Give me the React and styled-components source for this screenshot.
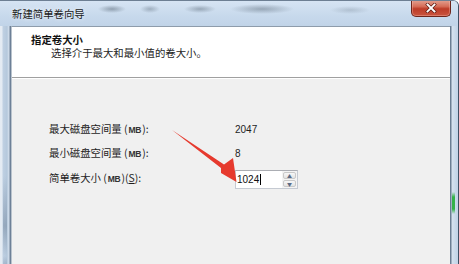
import styled, { createGlobalStyle } from 'styled-components';

const GlobalStyle = createGlobalStyle`
  html, body {
    margin: 0;
    padding: 0;
  }
  body {
    width: 459px;
    height: 264px;
    overflow: hidden;
    background: #fff;
  }
`;

const cjk = `"Noto Sans CJK SC", "Noto Sans", sans-serif`;

const Window = styled.div`
  position: relative;
  width: 459px;
  height: 264px;
  box-sizing: border-box;
  display: flex;
  flex-direction: column;
  overflow: hidden;
  border-top: 1px solid #6d7f93;
  border-right: 1px solid #3f5064;
  border-radius: 0 6px 0 0;
  background: #c9dbee;
  font-family: ${cjk};
`;

const TitleBar = styled.div`
  height: 25px;
  display: flex;
  align-items: flex-start;
  justify-content: space-between;
  padding-left: 12px;
  background:
    radial-gradient(ellipse 14px 4px at 112px 8px, rgba(70, 85, 100, 0.45), transparent),
    radial-gradient(ellipse 10px 4px at 150px 8px, rgba(70, 85, 100, 0.35), transparent),
    radial-gradient(ellipse 16px 4px at 200px 8px, rgba(70, 85, 100, 0.4), transparent),
    radial-gradient(ellipse 32px 5px at 262px 8px, rgba(70, 85, 100, 0.4), transparent),
    radial-gradient(ellipse 20px 4px at 350px 9px, rgba(90, 105, 120, 0.25), transparent),
    linear-gradient(to bottom, #d6e4f3 0%, #c7d9ec 60%, #c1d4e8 100%);
`;

const Title = styled.span`
  margin-top: 6px;
  font-size: 10.4px;
  line-height: 13px;
  color: #1b1b1b;
  text-shadow: 0 0 4px rgba(255, 255, 255, 0.9);
`;

const CloseButton = styled.div`
  width: 40px;
  height: 17px;
  margin-right: 7px;
  margin-top: -1px;
  box-sizing: border-box;
  display: flex;
  align-items: center;
  justify-content: center;
  border: 1px solid #6e251b;
  border-top: none;
  border-radius: 0 0 5px 5px;
  background: linear-gradient(to bottom, #e3a393 0%, #d66d58 40%, #bd3c28 55%, #c9553f 100%);
  box-shadow: inset 0 0 0 1px rgba(255, 200, 190, 0.35);
`;

const Frame = styled.div`
  flex: 1;
  display: flex;
  min-height: 0;
`;

const LeftEdge = styled.div`
  width: 11px;
  background:
    linear-gradient(to bottom, transparent 150px, rgba(80, 100, 125, 0.35) 200px, transparent 230px, rgba(60, 80, 110, 0.4) 250px) 3px 0 / 4px 100% no-repeat,
    linear-gradient(to right, #e4ebf3 0, #e4ebf3 2px, #bfd0e2 3px, #b5c8dc 7px, #d3dfec 9px, #6d8097 10px, #6d8097 11px);
`;

const RightEdge = styled.div`
  width: 8px;
  background:
    linear-gradient(to bottom, transparent 166px, #35b24a 171px, #35b24a 183px, transparent 188px) 2px 0 / 3px 100% no-repeat,
    linear-gradient(to right, #6b7e93 0, #6b7e93 1px, #d6e2ef 2px, #c2d4e7 7px, #c2d4e7 8px);
`;

const Client = styled.div`
  flex: 1;
  display: flex;
  flex-direction: column;
  border-top: 1px solid #8e9cab;
  border-left: 1px solid #b9c3cd;
`;

const Header = styled.div`
  height: 51px;
  box-sizing: border-box;
  background: #fff;
  border-bottom: 1px solid #a0a0a0;
  padding: 6px 0 0 19px;
  display: flex;
  flex-direction: column;
`;

const Heading = styled.div`
  font-size: 10.4px;
  line-height: 13px;
  font-weight: 700;
  color: #111;
`;

const Subheading = styled.div`
  margin: 0 0 0 20px;
  font-size: 10.4px;
  line-height: 13px;
  color: #1e1e1e;
`;

const Body = styled.div`
  flex: 1;
  background: #f0f0f0;
  border-top: 1px solid #fff;
  padding: 38px 0 0 37px;
  display: grid;
  grid-template-columns: 186px auto;
  grid-auto-rows: 24.5px;
  align-items: center;
  align-content: start;
`;

const Label = styled.div`
  font-size: 10.4px;
  line-height: 13px;
  color: #1e1e1e;
  white-space: nowrap;
`;

const Unit = styled.span`
  font-family: "Liberation Sans Narrow", "Liberation Sans", sans-serif;
  font-size: 8.5px;
  font-weight: 700;
  letter-spacing: -0.3px;
  color: #333;
  margin: 0 1px;
`;

const Value = styled.div`
  font-family: "Liberation Sans", Arial, sans-serif;
  font-size: 10px;
  color: #1e1e1e;
`;

const SpinBox = styled.div`
  width: 63px;
  height: 19px;
  box-sizing: border-box;
  display: flex;
  border: 1px solid #c5cad2;
  border-top-color: #abadb3;
  background: #fff;
  margin-top: 2px;
`;

const SpinText = styled.div`
  flex: 1;
  display: flex;
  align-items: center;
  padding-left: 1px;
  font-family: "Liberation Sans", Arial, sans-serif;
  font-size: 10px;
  color: #111;
`;

const Caret = styled.span`
  display: inline-block;
  width: 1px;
  height: 11px;
  margin-left: 1px;
  background: #000;
`;

const Spinner = styled.div`
  width: 15px;
  display: flex;
  flex-direction: column;
  gap: 1px;
  padding: 1px;
  box-sizing: border-box;
  background: #f4f4f4;
`;

const SpinButton = styled.div`
  flex: 1;
  display: flex;
  align-items: center;
  justify-content: center;
  border: 1px solid #c9c9c9;
  border-radius: 2px;
  background: linear-gradient(to bottom, #f7f7f7, #e3e3e3);
  font-size: 5px;
  line-height: 1;
  color: #5b6b84;
`;

const Overlay = styled.svg`
  position: absolute;
  left: 0;
  top: 0;
  pointer-events: none;
`;

function CloseGlyph() {
  return (
    <svg width="12" height="10" viewBox="0 0 12 10">
      <path d="M2.5 1.5 L9.5 8.5 M9.5 1.5 L2.5 8.5" stroke="#5a1a12" strokeWidth="3.2" strokeLinecap="square" />
      <path d="M2.5 1.5 L9.5 8.5 M9.5 1.5 L2.5 8.5" stroke="#fff" strokeWidth="1.9" strokeLinecap="square" />
    </svg>
  );
}

function App() {
  return (
    <>
      <GlobalStyle />
      <Window>
        <TitleBar>
          <Title>新建简单卷向导</Title>
          <CloseButton>
            <CloseGlyph />
          </CloseButton>
        </TitleBar>
        <Frame>
          <LeftEdge />
          <Client>
            <Header>
              <Heading>指定卷大小</Heading>
              <Subheading>选择介于最大和最小值的卷大小。</Subheading>
            </Header>
            <Body>
              <Label>最大磁盘空间量 (<Unit>MB</Unit>):</Label>
              <Value>2047</Value>
              <Label>最小磁盘空间量 (<Unit>MB</Unit>):</Label>
              <Value>8</Value>
              <Label>简单卷大小 (<Unit>MB</Unit>)(<u>S</u>):</Label>
              <SpinBox>
                <SpinText>1024<Caret /></SpinText>
                <Spinner>
                  <SpinButton>▲</SpinButton>
                  <SpinButton>▼</SpinButton>
                </Spinner>
              </SpinBox>
            </Body>
          </Client>
          <RightEdge />
        </Frame>
        <Overlay width="459" height="264" viewBox="0 0 459 264">
          <polygon
            points="172,129 224,163.5 233,157 236.5,181 221,172 221,167"
            fill="#e63a2e"
          />
        </Overlay>
      </Window>
    </>
  );
}

export default App;
